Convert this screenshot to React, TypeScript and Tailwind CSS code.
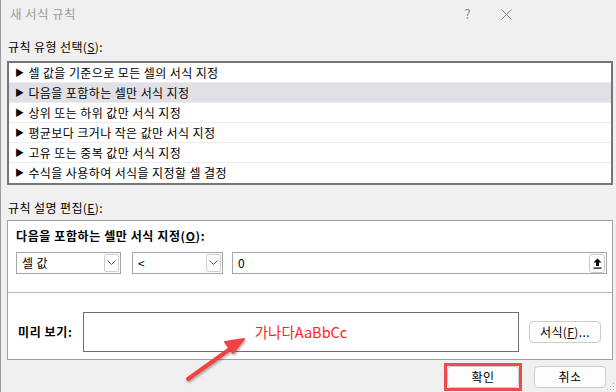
import React from "react"

const font = { fontFamily: '"Noto Sans CJK KR", "Noto Sans", sans-serif' }

const rules = [
  "셀 값을 기준으로 모든 셀의 서식 지정",
  "다음을 포함하는 셀만 서식 지정",
  "상위 또는 하위 값만 서식 지정",
  "평균보다 크거나 작은 값만 서식 지정",
  "고유 또는 중복 값만 서식 지정",
  "수식을 사용하여 서식을 지정할 셀 결정",
]

function Chevron() {
  return (
    <svg width="9" height="6" viewBox="0 0 9 6">
      <path d="M0.5 0.5 L4.5 4.5 L8.5 0.5" fill="none" stroke="#606060" strokeWidth="1" />
    </svg>
  )
}

function Select({ value, width }: { value: string; width: string }) {
  return (
    <div className={`${width} h-[22px] flex items-center justify-between border border-[#a6a6a6] bg-white pl-[5px] pr-[1px]`}>
      <span className="text-[12px] text-black tracking-[0.4px]">{value}</span>
      <div className="w-[15px] h-[18px] flex items-center justify-center border border-[#cfcfcf] rounded-[2px]">
        <Chevron />
      </div>
    </div>
  )
}

function Btn({ children }: { children: React.ReactNode }) {
  return (
    <button className="w-[72px] h-[22px] flex items-center justify-center rounded-[4px] border border-[#cccccc] bg-[#fdfdfd] text-[12px] text-black tracking-[0.4px]">
      {children}
    </button>
  )
}

export default function App() {
  return (
    <div
      className="relative w-[616px] h-[392px] overflow-hidden bg-[#f0f0f0] border-l border-[#9a9a9a] text-[12px] leading-[16px] text-black tracking-[0.4px]"
      style={font}
    >
      {/* title bar */}
      <div className="h-[28px] flex items-center pl-[9px] pr-[104px]">
        <span className="text-[12.5px] text-[#9b9b9b]">새 서식 규칙</span>
        <span className="ml-auto text-[13px] text-[#888888]">?</span>
        <svg className="ml-[30px]" width="11" height="11" viewBox="0 0 11 11">
          <path d="M0.5 0.5 L10.5 10.5 M10.5 0.5 L0.5 10.5" stroke="#8a8a8a" strokeWidth="1" />
        </svg>
      </div>

      <div className="mt-[11px] pl-[7px]">
        규칙 유형 선택(<span className="underline">S</span>):
      </div>

      <div className="mt-[6px] ml-[6px] w-[606px] border-2 border-[#767676] bg-white">
        {rules.map((r, i) => (
          <div
            key={r}
            className={`h-[20px] flex items-center pl-[6px] border-b ${i === 5 ? "border-transparent" : "border-[#ececec]"} ${i === 1 ? "bg-[#e1e0e6]" : ""}`}
          >
            <span className="text-[9px] mr-[4px]">▶</span>
            <span>{r}</span>
          </div>
        ))}
      </div>

      <div className="mt-[15px] pl-[7px]">
        규칙 설명 편집(<span className="underline">E</span>):
      </div>

      <div className="mt-[4px] ml-[6px] w-[606px] border border-[#a0a0a0] bg-white">
        <div className="h-[72px] border-b border-[#b4b4b4] pt-[7px] pl-[8px] pr-[5px]">
          <div className="font-bold tracking-[0.6px]">
            다음을 포함하는 셀만 서식 지정(<span className="underline">O</span>):
          </div>
          <div className="mt-[8px] flex items-center">
            <Select value="셀 값" width="w-[105px]" />
            <div className="ml-[11px]">
              <Select value="<" width="w-[91px]" />
            </div>
            <div className="ml-[9px] flex-1 h-[22px] flex items-center justify-between border border-[#a6a6a6] bg-white pl-[5px] pr-[1px]">
              <span>0</span>
              <div className="w-[16px] h-[19px] flex items-center justify-center border border-[#c8c8c8] rounded-[3px] bg-white">
                <svg width="9" height="11" viewBox="0 0 9 11">
                  <path d="M4.5 0.5 L8.5 4.5 L6 4.5 L6 8 L3 8 L3 4.5 L0.5 4.5 Z" fill="#000" />
                  <rect x="0.5" y="9.5" width="8" height="1.2" fill="#000" />
                </svg>
              </div>
            </div>
          </div>
        </div>
        <div className="h-[66px] flex items-center pl-[10px] pr-[10px] pt-[12px] pb-[1px]">
          <span className="font-bold w-[65px] tracking-[0.6px]">미리 보기:</span>
          <div className="w-[436px] h-[40px] flex items-center justify-center border border-[#6e6e6e] bg-white">
            <span className="text-[14.5px] text-[#ff1e1e] tracking-normal">가나다AaBbCc</span>
          </div>
          <div className="ml-[10px]">
            <Btn>
              서식(<span className="underline">F</span>)...
            </Btn>
          </div>
        </div>
      </div>

      <div className="mt-[3px] flex justify-end items-center pr-[10px]">
        <div className="border-[3px] border-[#ef4b4b] p-0">
          <Btn>확인</Btn>
        </div>
        <div className="ml-[12px]">
          <Btn>취소</Btn>
        </div>
      </div>

      {/* size grip */}
      <svg className="absolute right-[1px] bottom-[1px]" width="8" height="8" viewBox="0 0 8 8">
        <rect x="6" y="0" width="1" height="1" fill="#b0b0b0" />
        <rect x="3" y="3" width="1" height="1" fill="#b0b0b0" />
        <rect x="6" y="3" width="1" height="1" fill="#b0b0b0" />
        <rect x="0" y="6" width="1" height="1" fill="#b0b0b0" />
        <rect x="3" y="6" width="1" height="1" fill="#b0b0b0" />
        <rect x="6" y="6" width="1" height="1" fill="#b0b0b0" />
      </svg>

      {/* annotation arrow */}
      <svg className="absolute left-0 top-0 pointer-events-none" width="616" height="392" viewBox="0 0 616 392">
        <defs>
          <filter id="sh" x="-20%" y="-20%" width="140%" height="140%">
            <feDropShadow dx="1" dy="1.5" stdDeviation="1.2" floodColor="#000" floodOpacity="0.35" />
          </filter>
        </defs>
        <g filter="url(#sh)">
          <path d="M187 379 L229 349" stroke="#f04343" strokeWidth="4" strokeLinecap="round" />
          <path d="M243 339 L224 342 L232 353 Z" fill="#f04343" stroke="#f04343" strokeWidth="2" strokeLinejoin="round" />
        </g>
      </svg>
    </div>
  )
}
